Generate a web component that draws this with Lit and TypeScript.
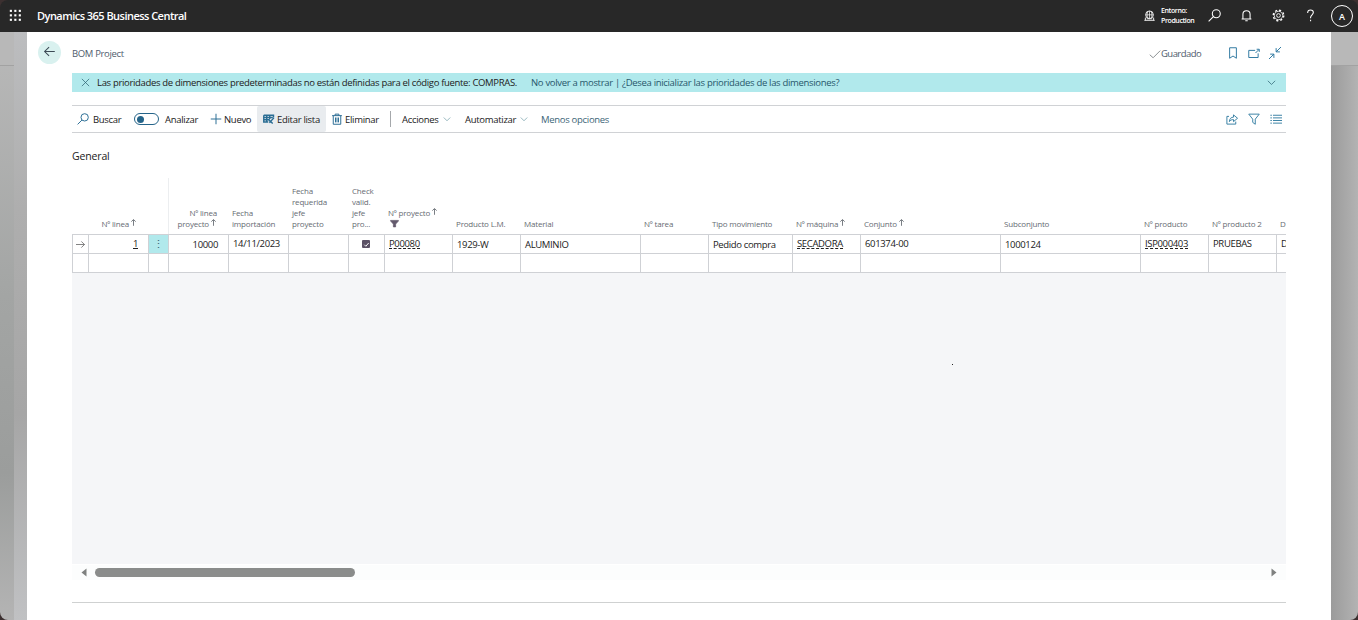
import {html, svg, css, LitElement} from 'lit';
import {customElement, property} from 'lit/decorators.js';
import {classMap} from 'lit/directives/class-map.js';

const ICONS: Record<string, unknown> = {
  waffle: svg`<g fill="#fff" stroke="none">${[1, 6.5, 12].map((y) => [1, 6.5, 12].map((x) => svg`<rect x=${x} y=${y} width="2.6" height="2.6"/>`))}</g>`,
  search: svg`<circle cx="10.2" cy="5.8" r="4.9"/><path d="M6.6 9.4 0.8 15.2"/>`,
  bell: svg`<path d="M2 12.2h12M3.6 12V6.500a4.400 4.400 0 0 1 8.800 0V12M6.500 14.500h3"/>`,
  gear: svg`<circle cx="8" cy="8" r="5.2" stroke-width="1"/><circle cx="8" cy="8" r="2.300" stroke-width="1.100"/><circle cx="8" cy="8" r="6.500" stroke-width="1.600" stroke-dasharray="2.550 2.555"/>`,
  help: svg`<path d="M4.500 4.800C4.500 2.400 6.200 1.200 8 1.200s3.500 1.200 3.500 3.200c0 2.600-3.400 3-3.400 6v1M8.100 13.200V15"/>`,
  environment: svg`<path d="M0.500 15h15M2 15v-4M14 15v-4"/><circle cx="8" cy="7" r="5.600"/><path d="M2.500 7h11M8 1.500v11M5.500 2.200c-1.200 3-1.200 6.600 0 9.600M10.500 2.200c1.200 3 1.200 6.600 0 9.600M4 12.800h8" stroke-width="1"/>`,
  back: svg`<path d="M14.500 8H2M7.500 2.500 2 8l5.500 5.500"/>`,
  check: svg`<path d="M1 9l4.500 4L15 3.500"/>`,
  bookmark: svg`<path d="M3.500 1h9v14L8 12l-4.500 3z"/>`,
  popout: svg`<path d="M9.500 4.500H1v9.500h12.500V8.500M10 8 14.500 3.500M11.500 3h3.500v3.500"/>`,
  collapse: svg`<path d="M16 0 9.500 6.500M9.500 1.500v5h5M0 16l6.500-6.500M1.500 9.500h5v5"/>`,
  close: svg`<path d="M1.500 1.500l13 13M14.500 1.500l-13 13"/>`,
  chevron: svg`<path d="M1.500 5l6.500 6.500L14.500 5"/>`,
  plus: svg`<path d="M8 1v14M1 8h14"/>`,
  editList: svg`<g stroke-width="1.900"><path d="M1 3h13v3M1 3v9h6M1 6h12M1 9h8M5 3v9M9 3v5"/><path d="M14.500 6.500 8.500 13M8 9.500l5 4.500"/></g>`,
  trash: svg`<path d="M1.500 3.500h13M5.500 3.500v-2h5v2M3 3.500V15h10V3.500"/><path d="M6 6v6.500M8 6v6.500M10 6v6.500"/>`,
  share: svg`<path d="M4 4.500H1.200v10.300H13V11.500M4.500 11.500c.2-4 2.300-6 5.500-6V2.500L15.400 7 10 11.500V8.800c-2.600 0-4.200.600-5.500 2.700z"/>`,
  filter: svg`<path d="M1 1.500h14L9.700 8.200V15l-3.400-2.500V8.200z"/>`,
  list: svg`<path d="M4 3h12M4 6.500h12M4 10h12M4 13.500h12M.5 3h2M.5 6.500h2M.5 10h2M.5 13.500h2"/>`,
  rowArrow: svg`<path d="M0 8h15M9.500 2.500 15 8l-5.500 5.500"/>`,
  sort: svg`<path d="M8 15.500V2M3 6 8 1.200 13 6" stroke-width="2"/>`,
  funnel: svg`<path d="M1 2.500h14v1L10 9v5H6V9L1 3.500z" fill="currentColor"/>`,
  tick: svg`<path d="M3 8.500l3.500 3.500L13 4.500" stroke-width="2.200"/>`,
  left: svg`<path d="M13 0v16L3 8z" fill="currentColor" stroke="none"/>`,
  right: svg`<path d="M3 0v16L13 8z" fill="currentColor" stroke="none"/>`,
};

@customElement('bc-icon')
export class BcIcon extends LitElement {
  static styles = css`
    :host {
      display: inline-flex;
      flex: none;
      width: 12px;
      height: 12px;
    }
    svg {
      width: 100%;
      height: 100%;
      fill: none;
      stroke: currentColor;
      stroke-width: 1.3;
      overflow: visible;
    }
  `;

  @property() name = '';

  render() {
    return html`<svg viewBox="0 0 16 16">${ICONS[this.name]}</svg>`;
  }
}

interface Column {
  head: string[];
  value: string;
  sort?: boolean;
  filter?: boolean;
  right?: boolean;
  link?: boolean;
  raised?: boolean;
  check?: boolean;
}

const COLUMNS: Column[] = [
  {head: ['Nº linea', 'proyecto'], value: '10000', sort: true, right: true},
  {head: ['Fecha', 'importación'], value: '14/11/2023', raised: true},
  {head: ['Fecha', 'requerida', 'jefe', 'proyecto'], value: ''},
  {head: ['Check', 'valid.', 'jefe', 'pro...'], value: '', check: true},
  {head: ['Nº proyecto'], value: 'P00080', sort: true, filter: true, link: true, raised: true},
  {head: ['Producto L.M.'], value: '1929-W'},
  {head: ['Material'], value: 'ALUMINIO'},
  {head: ['Nº tarea'], value: ''},
  {head: ['Tipo movimiento'], value: 'Pedido compra'},
  {head: ['Nº máquina'], value: 'SECADORA', sort: true, link: true, raised: true},
  {head: ['Conjunto'], value: '601374-00', sort: true, raised: true},
  {head: ['Subconjunto'], value: '1000124'},
  {head: ['Nº producto'], value: 'ISP000403', link: true, raised: true},
  {head: ['Nº producto 2'], value: 'PRUEBAS', raised: true},
  {head: ['D'], value: 'D', raised: true},
];

@customElement('bom-grid')
export class BomGrid extends LitElement {
  static styles = css`
    :host {
      display: flex;
      flex-direction: column;
      height: 402px;
      overflow: hidden;
      color: #212121;
      font-size: 9.5px;
    }
    .row {
      display: grid;
      grid-template-columns: 16px 60px 20px 60px 60px 60px 36px 68px 68px 120px 68px 84px 68px 140px 140px 68px 68px 68px;
      flex: none;
      width: 1272px;
    }
    .head {
      height: 56px;
      color: #666b72;
      font-size: 8px;
      line-height: 11px;
    }
    .th {
      display: flex;
      flex-direction: column;
      justify-content: flex-end;
      padding: 0 0 5px 4px;
      white-space: nowrap;
      letter-spacing: -0.18px;
    }
    .th.right {
      align-items: flex-end;
      padding-right: 11px;
    }
    .th.frozen {
      border-left: 1px solid #eceef0;
    }
    .line {
      display: flex;
      align-items: center;
      height: 11px;
    }
    .sort {
      width: 7px;
      height: 7px;
      margin: -2px 0 0 1px;
    }
    .funnel {
      width: 9px;
      height: 9px;
      margin-left: 2px;
      color: #63596c;
    }
    .body {
      height: 19px;
      box-sizing: border-box;
      border-top: 1px solid #cfd1d5;
      background: #fff;
    }
    .last {
      height: 20px;
      border-bottom: 1px solid #cfd1d5;
    }
    .td {
      display: flex;
      align-items: center;
      box-sizing: border-box;
      border-left: 1px solid #cfd1d5;
      padding: 2px 0 0 4px;
      white-space: nowrap;
      line-height: 12px;
      letter-spacing: -0.35px;
    }
    .td.right {
      justify-content: flex-end;
      padding-right: 10px;
    }
    .td.raised {
      padding-top: 0;
    }
    .td.center {
      justify-content: center;
      padding: 0 1px 0 0;
      color: #555;
    }
    .td.menu {
      padding: 0;
      background: #b1e9ec;
      color: #3b6475;
      font-size: 11px;
    }
    .link {
      border-bottom: 1px dashed #212121;
      line-height: 9px;
    }
    .number {
      border-bottom: 1px solid #212121;
      line-height: 9px;
    }
    .box {
      display: flex;
      align-items: center;
      justify-content: center;
      width: 8px;
      height: 8px;
      border-radius: 1px;
      background: #5c5266;
      color: #fff;
    }
    .box bc-icon {
      width: 7px;
      height: 7px;
    }
    .row-arrow {
      width: 9px;
      height: 9px;
    }
    .rest {
      flex: 1;
      background: #f5f6f8;
    }
    .scroll {
      display: flex;
      align-items: center;
      height: 15px;
      flex: none;
      margin-top: 1px;
      padding: 0 8px;
      background: #fcfdfd;
      color: #7f8180;
    }
    .scroll bc-icon {
      width: 8px;
      height: 9px;
    }
    .thumb {
      width: 260px;
      height: 9px;
      margin: 0 auto 0 7px;
      border-radius: 5px;
      background: #8a8c8b;
    }
  `;

  renderHead(c: Column, i: number) {
    const last = c.head.length - 1;
    return html`
      <div class=${classMap({th: true, right: !!c.right, frozen: i === 0})}>
        ${c.head.map((text, n) => html`
          <div class="line">${text}${c.sort && n === last ? html`<bc-icon class="sort" name="sort"></bc-icon>` : ''}</div>
        `)}
        ${c.filter ? html`<div class="line"><bc-icon class="funnel" name="funnel"></bc-icon></div>` : ''}
      </div>
    `;
  }

  renderCell(c: Column) {
    if (c.check) {
      return html`<div class="td center"><span class="box"><bc-icon name="tick"></bc-icon></span></div>`;
    }
    return html`
      <div class=${classMap({td: true, right: !!c.right, raised: !!c.raised})}>
        <span class=${classMap({link: !!c.link})}>${c.value}</span>
      </div>
    `;
  }

  render() {
    return html`
      <div class="row head">
        <div></div>
        <div class="th right"><div class="line">Nº linea<bc-icon class="sort" name="sort"></bc-icon></div></div>
        <div></div>
        ${COLUMNS.map((c, i) => this.renderHead(c, i))}
      </div>
      <div class="row body">
        <div class="td center"><bc-icon class="row-arrow" name="rowArrow"></bc-icon></div>
        <div class="td right raised"><span class="number">1</span></div>
        <div class="td center menu">⋮</div>
        ${COLUMNS.map((c) => this.renderCell(c))}
      </div>
      <div class="row body last">
        ${Array.from({length: 18}, () => html`<div class="td"></div>`)}
      </div>
      <div class="rest"></div>
      <div class="scroll">
        <bc-icon name="left"></bc-icon>
        <div class="thumb"></div>
        <bc-icon name="right"></bc-icon>
      </div>
    `;
  }
}

@customElement('app-root')
export class AppRoot extends LitElement {
  static styles = css`
    :host {
      display: flex;
      flex-direction: column;
      width: 1358px;
      height: 620px;
      overflow: hidden;
      background: #3c3030;
      font-family: 'Open Sans', 'Noto Sans', sans-serif;
      font-size: 9.5px;
      color: #212121;
    }
    .topbar {
      display: flex;
      align-items: center;
      height: 32px;
      flex: none;
      box-sizing: border-box;
      padding: 0 5px 0 9px;
      border-radius: 8px 8px 0 0;
      background: #282828;
      color: #fff;
    }
    .topbar bc-icon {
      width: 13px;
      height: 13px;
      margin-top: -1px;
    }
    .brand {
      margin: -2px auto 0 15px;
      font-size: 11px;
      font-weight: 600;
      letter-spacing: -0.53px;
    }
    .topbar .globe {
      width: 11px;
      height: 11px;
      margin-right: 6px;
    }
    .env {
      width: 47px;
      font-size: 7px;
      font-weight: 600;
      line-height: 10px;
      letter-spacing: -0.4px;
    }
    .tools {
      display: flex;
      gap: 19px;
      margin-right: 14px;
    }
    .avatar {
      display: flex;
      align-items: center;
      justify-content: center;
      box-sizing: border-box;
      width: 22px;
      height: 22px;
      border: 1px solid #fff;
      border-radius: 50%;
      font-size: 9px;
      font-weight: 600;
    }
    .shell {
      display: flex;
      flex: 1;
      border-radius: 0 0 8px 8px;
      overflow: hidden;
    }
    .side {
      display: flex;
      flex-direction: column;
      width: 14px;
      background: linear-gradient(#b9b9b9, #a3a5a4 45%, #9b9d9c 75%, #b4b4b4);
    }
    .side.right {
      width: 27px;
      background: linear-gradient(90deg, #9b9b9b, #b3b3b3);
    }
    .side-head {
      height: 33px;
      border-bottom: 1px solid #a2a2a2;
      background: #b8b8b8;
    }
    .fold {
      width: 13px;
      background: linear-gradient(#bcbdbf, #aeaeae 30%, #a6a6a6 65%, #c0c1c3);
    }
    .page {
      flex: 1;
      min-width: 0;
      padding: 0 45px;
      background: #fff;
    }
    .title {
      display: flex;
      align-items: center;
      height: 41px;
      margin-left: -34px;
      color: #505c6d;
      letter-spacing: -0.35px;
    }
    .back {
      display: flex;
      align-items: center;
      justify-content: center;
      width: 23px;
      height: 23px;
      margin-right: 11px;
      border-radius: 50%;
      background: #d9f1ef;
      color: #3c4a55;
    }
    .back bc-icon {
      width: 13px;
      height: 13px;
      margin-top: -2px;
    }
    .title-text {
      margin: 2px auto 0 0;
    }
    .saved {
      display: flex;
      align-items: center;
      width: 78px;
      padding-top: 2px;
      letter-spacing: -0.55px;
    }
    .saved bc-icon {
      color: #8b8f92;
    }
    .page-tools {
      display: flex;
      gap: 9px;
      margin-right: 5px;
      padding-top: 1px;
      color: #2e78a0;
    }
    .banner {
      display: flex;
      align-items: center;
      height: 19px;
      box-sizing: border-box;
      padding: 0 10px 0 9px;
      background: #b1e9ec;
      white-space: nowrap;
    }
    .banner bc-icon {
      width: 9px;
      height: 9px;
      color: #2b6272;
    }
    .message {
      width: 434px;
      margin-left: 7px;
      letter-spacing: -0.33px;
    }
    .actions {
      margin-right: auto;
      color: #27576b;
      letter-spacing: -0.32px;
    }
    .toolbar {
      display: grid;
      grid-template-columns: 57px 76px 52px 69px 64px 70px 76px 1fr auto;
      height: 28px;
      box-sizing: border-box;
      margin-top: 13px;
      padding-right: 4px;
      border: solid #d0d2d5;
      border-width: 1px 0;
    }
    .action {
      display: flex;
      align-items: center;
      gap: 4px;
      padding-left: 5px;
      white-space: nowrap;
      letter-spacing: -0.3px;
    }
    .action bc-icon {
      color: #2a6d94;
    }
    .action.new {
      gap: 2px;
    }
    .action.active {
      gap: 2px;
      padding-left: 6px;
      border-radius: 2px;
      background: #e9ecef;
    }
    .action.delete {
      gap: 2px;
    }
    .menu bc-icon {
      width: 8px;
      height: 8px;
      color: #62939e;
    }
    .action.split {
      padding-left: 0;
    }
    .divider {
      height: 16px;
      margin-right: 7px;
      border-left: 1px solid #a5a8ab;
    }
    .action.less {
      color: #3d6577;
      letter-spacing: -0.3px;
    }
    .switch {
      display: flex;
      align-items: center;
      box-sizing: border-box;
      width: 25px;
      height: 12px;
      margin-right: 2px;
      padding-left: 2px;
      border: 1px solid #256489;
      border-radius: 6px;
    }
    .knob {
      width: 7px;
      height: 7px;
      border-radius: 50%;
      background: #256489;
    }
    .view-tools {
      display: flex;
      align-items: center;
      gap: 10px;
      margin-top: -1px;
      color: #3a82a5;
    }
    .section {
      height: 45px;
      font-size: 10.5px;
      line-height: 46px;
      letter-spacing: -0.15px;
    }
    .footer {
      margin-top: 22px;
      border-top: 1px solid #cfd1d1;
    }
    .speck {
      position: absolute;
      left: 952px;
      top: 364px;
      width: 1px;
      height: 1px;
      background: #222;
    }
  `;

  render() {
    return html`
      <header class="topbar">
        <bc-icon name="waffle"></bc-icon>
        <span class="brand">Dynamics 365 Business Central</span>
        <bc-icon class="globe" name="environment"></bc-icon>
        <div class="env">Entorno:<br />Production</div>
        <div class="tools">
          ${['search', 'bell', 'gear', 'help'].map((name) => html`<bc-icon name=${name}></bc-icon>`)}
        </div>
        <span class="avatar">A</span>
      </header>
      <div class="shell">
        <div class="side"><div class="side-head"></div></div>
        <div class="fold"></div>
        <main class="page">
          <div class="title">
            <span class="back"><bc-icon name="back"></bc-icon></span>
            <span class="title-text">BOM Project</span>
            <span class="saved"><bc-icon name="check"></bc-icon>Guardado</span>
            <span class="page-tools">
              <bc-icon name="bookmark"></bc-icon>
              <bc-icon name="popout"></bc-icon>
              <bc-icon name="collapse"></bc-icon>
            </span>
          </div>
          <div class="banner">
            <bc-icon name="close"></bc-icon>
            <span class="message">Las prioridades de dimensiones predeterminadas no están definidas para el código fuente: COMPRAS.</span>
            <span class="actions">No volver a mostrar | ¿Desea inicializar las prioridades de las dimensiones?</span>
            <bc-icon name="chevron"></bc-icon>
          </div>
          <div class="toolbar">
            <span class="action"><bc-icon name="search"></bc-icon>Buscar</span>
            <span class="action"><span class="switch"><span class="knob"></span></span>Analizar</span>
            <span class="action new"><bc-icon name="plus"></bc-icon>Nuevo</span>
            <span class="action active"><bc-icon name="editList"></bc-icon>Editar lista</span>
            <span class="action delete"><bc-icon name="trash"></bc-icon>Eliminar</span>
            <span class="action menu split"><span class="divider"></span>Acciones<bc-icon name="chevron"></bc-icon></span>
            <span class="action menu">Automatizar<bc-icon name="chevron"></bc-icon></span>
            <span class="action less">Menos opciones</span>
            <span class="view-tools">
              <bc-icon name="share"></bc-icon>
              <bc-icon name="filter"></bc-icon>
              <bc-icon name="list"></bc-icon>
            </span>
          </div>
          <div class="section">General</div>
          <bom-grid></bom-grid>
          <div class="footer"></div>
        </main>
        <div class="side right"><div class="side-head"></div></div>
      </div>
      <div class="speck"></div>
    `;
  }
}
